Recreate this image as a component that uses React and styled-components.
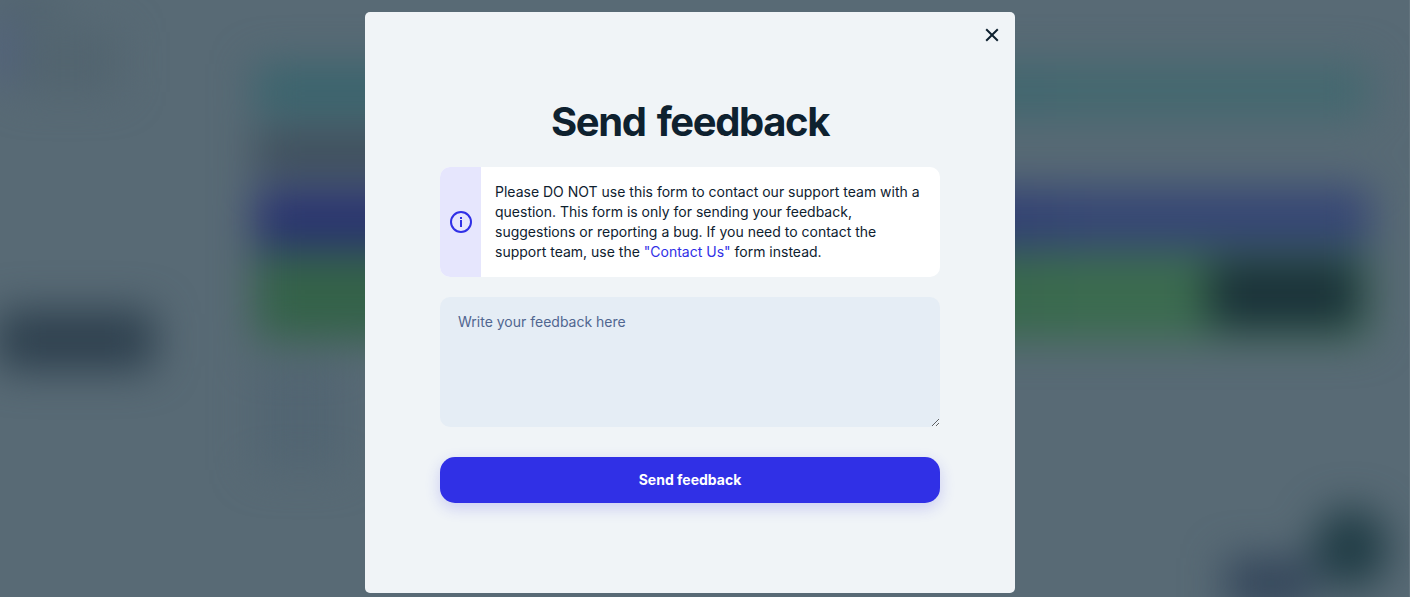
import React, { useState } from "react";
import styled, { createGlobalStyle } from "styled-components";

const GlobalStyle = createGlobalStyle`
  * {
    box-sizing: border-box;
  }

  body {
    margin: 0;
    overflow: hidden;
    background: #586a75;
    color: #0e212f;
    font-family: Inter, "Liberation Sans", sans-serif;
  }
`;

const Screen = styled.div`
  position: relative;
  height: 100vh;
  border-right: 1px solid #63747e;
  overflow: hidden;
`;

const Page = styled.div`
  position: absolute;
  inset: 0;
  display: flex;
  justify-content: space-between;
  filter: blur(21px);
`;

const Sidebar = styled.div`
  width: 155px;
`;

const Logo = styled.div`
  width: 60px;
  height: 10px;
  background: #435563;
`;

const ActiveMark = styled.div`
  width: 4px;
  height: 62px;
  margin-top: 10px;
  background: #3130b0;
`;

const NavBlock = styled.div`
  width: 105px;
  height: 60px;
  margin-top: -50px;
  margin-left: 15px;
  background: #52646f;
`;

const SidebarButton = styled.div`
  height: 60px;
  margin-top: 218px;
  margin-left: -4px;
  border-radius: 12px;
  background: #2e404e;
`;

const Content = styled.div`
  width: 1115px;
  margin-right: 39px;
  padding-top: 64px;
`;

const Banner = styled.div`
  display: flex;
  justify-content: flex-end;
  align-items: center;
  height: ${(props) => props.$height}px;
  background: linear-gradient(90deg, ${(props) => props.$from} 50%, ${(props) => props.$to} 75%);
`;

const Heading = styled.div`
  width: 400px;
  height: 36px;
  margin: 16px 0 18px;
  background: #3a4a58;
`;

const BannerButton = styled.div`
  width: 152px;
  height: 66px;
  margin-right: 10px;
  border-radius: 12px;
  background: #1a3139;
`;

const TextBlock = styled.div`
  width: 90px;
  height: 110px;
  margin-top: 20px;
  background: #526572;
`;

const ChatRow = styled.div`
  display: flex;
  justify-content: flex-end;
  align-items: flex-end;
  height: 80px;
  margin-top: 38px;
  margin-right: -18px;
`;

const ChatLabel = styled.div`
  width: 88px;
  height: 50px;
  margin-bottom: -20px;
  background: #33455a;
`;

const ChatBubble = styled.div`
  width: 74px;
  height: 80px;
  border-radius: 40px;
  background: #203c45;
`;

const Overlay = styled.div`
  position: relative;
  display: flex;
  justify-content: center;
  padding: 12px 29px 0 0;
`;

const Modal = styled.div`
  display: flex;
  flex-direction: column;
  width: 650px;
  height: 581px;
  border-radius: 5px;
  background: #f0f4f7;
`;

const ModalHeader = styled.div`
  display: flex;
  justify-content: flex-end;
  height: 46px;
  padding: 16px 16px 0 0;
`;

const CloseButton = styled.button`
  width: 14px;
  height: 14px;
  padding: 0;
  border: 0;
  background: none;
  color: #0e212f;
  cursor: pointer;

  svg {
    display: block;
  }
`;

const Form = styled.form`
  display: flex;
  flex-direction: column;
  padding: 39px 75px 0;
`;

const Title = styled.h1`
  margin: 0 0 21px;
  font-size: 40px;
  font-weight: 700;
  line-height: 49px;
  letter-spacing: -1.4px;
  word-spacing: 3px;
  text-align: center;
  white-space: nowrap;
`;

const Notice = styled.div`
  display: flex;
  height: 110px;
  border-radius: 10px;
  overflow: hidden;
  background: #fff;
`;

const NoticeIcon = styled.div`
  display: flex;
  flex: none;
  justify-content: center;
  align-items: center;
  width: 41px;
  background: #e6e6fd;
  color: #3030e6;
`;

const NoticeText = styled.p`
  margin: 0;
  padding: 15px 14px;
  font-size: 14px;
  line-height: 20px;

  a {
    color: #3030e6;
    text-decoration: none;
  }
`;

const Message = styled.textarea`
  display: block;
  width: 100%;
  height: 130px;
  margin-top: 20px;
  padding: 15px 18px;
  border: 0;
  border-radius: 10px;
  outline: none;
  background: #e5edf5;
  color: #0e212f;
  font-family: inherit;
  font-size: 14px;
  line-height: 20px;

  &::placeholder {
    color: #506690;
  }
`;

const SubmitButton = styled.button`
  height: 46px;
  margin-top: 30px;
  padding: 0 0 2px;
  border: 0;
  border-radius: 15px;
  background: #3030e6;
  box-shadow: 0 5px 15px rgba(48, 48, 230, 0.2);
  color: #fff;
  font-family: inherit;
  font-size: 14px;
  font-weight: 700;
  cursor: pointer;
`;

const CloseIcon = () => (
  <svg width="14" height="14" viewBox="0 0 14 14" fill="none" stroke="currentColor" strokeWidth="2">
    <path d="M1.2 1.2L12.8 12.8M12.8 1.2L1.2 12.8" />
  </svg>
);

const InfoIcon = () => (
  <svg width="22" height="22" viewBox="0 0 22 22" fill="none" stroke="currentColor" strokeWidth="2">
    <circle cx="11" cy="11" r="10" />
    <path d="M11 9V16M11 6V8" />
  </svg>
);

function App() {
  const [message, setMessage] = useState("");

  return (
    <Screen>
      <GlobalStyle />
      <Page>
        <Sidebar>
          <Logo />
          <ActiveMark />
          <NavBlock />
          <SidebarButton />
        </Sidebar>
        <Content>
          <Banner $height={54} $from="#3a646d" $to="#43686f" />
          <Heading />
          <Banner $height={62} $from="#2a3470" $to="#364675" />
          <Banner $height={90} $from="#346249" $to="#3b6b4f">
            <BannerButton />
          </Banner>
          <TextBlock />
          <ChatRow>
            <ChatLabel />
            <ChatBubble />
          </ChatRow>
        </Content>
      </Page>
      <Overlay>
        <Modal>
          <ModalHeader>
            <CloseButton aria-label="Close">
              <CloseIcon />
            </CloseButton>
          </ModalHeader>
          <Form onSubmit={(e) => e.preventDefault()}>
            <Title>Send feedback</Title>
            <Notice>
              <NoticeIcon>
                <InfoIcon />
              </NoticeIcon>
              <NoticeText>
                Please DO NOT use this form to contact our support team with a question. This form is only
                for sending your feedback, suggestions or reporting a bug. If you need to contact the support
                team, use the <a href="#contact">"Contact Us"</a> form instead.
              </NoticeText>
            </Notice>
            <Message
              placeholder="Write your feedback here"
              value={message}
              onChange={(e) => setMessage(e.target.value)}
            />
            <SubmitButton type="submit">Send feedback</SubmitButton>
          </Form>
        </Modal>
      </Overlay>
    </Screen>
  );
}

export default App;
